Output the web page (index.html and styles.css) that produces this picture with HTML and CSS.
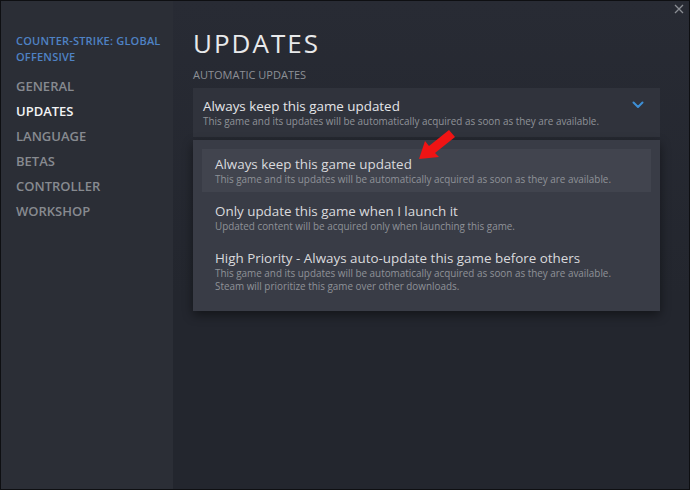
FILE: index.html
```html
<!DOCTYPE html>
<html>
<head>
<meta charset="utf-8">
<link rel="stylesheet" href="styles.css">
</head>
<body>
<div class="window">
  <aside class="sidebar">
    <div class="game-title">COUNTER-STRIKE: GLOBAL OFFENSIVE</div>
    <nav class="nav">
      <div class="nav-item">GENERAL</div>
      <div class="nav-item active">UPDATES</div>
      <div class="nav-item">LANGUAGE</div>
      <div class="nav-item">BETAS</div>
      <div class="nav-item">CONTROLLER</div>
      <div class="nav-item">WORKSHOP</div>
    </nav>
  </aside>
  <main class="content">
    <h1 class="page-title">UPDATES</h1>
    <div class="section-label">AUTOMATIC UPDATES</div>
    <div class="select">
      <div class="select-text">
        <div class="opt-title">Always keep this game updated</div>
        <div class="opt-desc">This game and its updates will be automatically acquired as soon as they are available.</div>
      </div>
      <svg class="chevron" width="12" height="8" viewBox="0 0 12 8"><path d="M1.5 1.5 L6 6 L10.5 1.5" fill="none" stroke="#3d8fd6" stroke-width="2" stroke-linecap="round" stroke-linejoin="round"/></svg>
    </div>
    <div class="menu">
      <div class="menu-item selected">
        <div class="opt-title">Always keep this game updated</div>
        <div class="opt-desc">This game and its updates will be automatically acquired as soon as they are available.</div>
      </div>
      <div class="menu-item">
        <div class="opt-title">Only update this game when I launch it</div>
        <div class="opt-desc">Updated content will be acquired only when launching this game.</div>
      </div>
      <div class="menu-item">
        <div class="opt-title">High Priority - Always auto-update this game before others</div>
        <div class="opt-desc">This game and its updates will be automatically acquired as soon as they are available.<br>Steam will prioritize this game over other downloads.</div>
      </div>
    </div>
  </main>
  <svg class="close" width="10" height="10" viewBox="0 0 10 10"><path d="M1 1 L9 9 M9 1 L1 9" stroke="#8b8e94" stroke-width="1.3"/></svg>
  <svg class="arrow" width="40" height="34" viewBox="0 0 40 34"><polygon points="0,30 6,12 10,17 30,1 36,8 16,24 20,28" fill="#f01414"/></svg>
</div>
</body>
</html>
```

FILE: styles.css
```css
html, body {
  margin: 0;
  padding: 0;
  background: #000;
}
body {
  width: 690px;
  height: 490px;
  font-family: "Open Sans", "Noto Sans", sans-serif;
}
.window {
  position: relative;
  box-sizing: border-box;
  width: 690px;
  height: 490px;
  border: 1px solid #0e0f12;
  display: flex;
  background: #23262e;
  overflow: hidden;
}
.sidebar {
  width: 172px;
  flex: none;
  background: #2b2e36;
  padding: 32px 0 0 15px;
  box-sizing: border-box;
}
.game-title {
  color: #4f82c4;
  font-size: 11px;
  font-weight: 600;
  line-height: 16px;
  width: 150px;
  letter-spacing: 0.2px;
}
.nav {
  margin-top: 9px;
  display: flex;
  flex-direction: column;
}
.nav-item {
  color: #878a90;
  font-size: 13px;
  font-weight: 600;
  line-height: 25px;
}
.nav-item.active {
  color: #f2f3f5;
}
.content {
  flex: 1;
  padding: 26px 29px 0 20px;
  background: linear-gradient(180deg, #282b34 0%, #23262e 60%);
}
.page-title {
  margin: 0;
  color: #e8e9eb;
  font-size: 26px;
  font-weight: 400;
  letter-spacing: 2px;
  line-height: 32px;
}
.section-label {
  margin-top: 9px;
  color: #8d9096;
  font-size: 11px;
  line-height: 14px;
}
.select {
  margin-top: 6px;
  background: #30333c;
  height: 49px;
  box-sizing: border-box;
  padding: 10px 10px 0 10px;
  display: flex;
  justify-content: space-between;
  align-items: flex-start;
}
.chevron {
  margin-top: 3px;
  margin-right: 6px;
}
.opt-title {
  color: #e4e5e8;
  font-size: 13.4px;
  line-height: 17px;
}
.opt-desc {
  color: #8f9298;
  font-size: 9.9px;
  line-height: 13px;
}
.menu {
  margin-top: 3px;
  background: #393c46;
  padding: 9px 9px 12px 9px;
  box-shadow: 0 4px 10px rgba(0,0,0,0.45);
  display: flex;
  flex-direction: column;
  gap: 4px;
}
.menu-item {
  padding: 7px 13px 6px 13px;
}
.menu-item.selected {
  background: #41444e;
}
.menu-item .opt-title {
  color: #d9dadd;
}
.close {
  position: absolute;
  right: 5px;
  top: 3px;
}
.arrow {
  position: absolute;
  left: 418px;
  top: 128px;
}
```
